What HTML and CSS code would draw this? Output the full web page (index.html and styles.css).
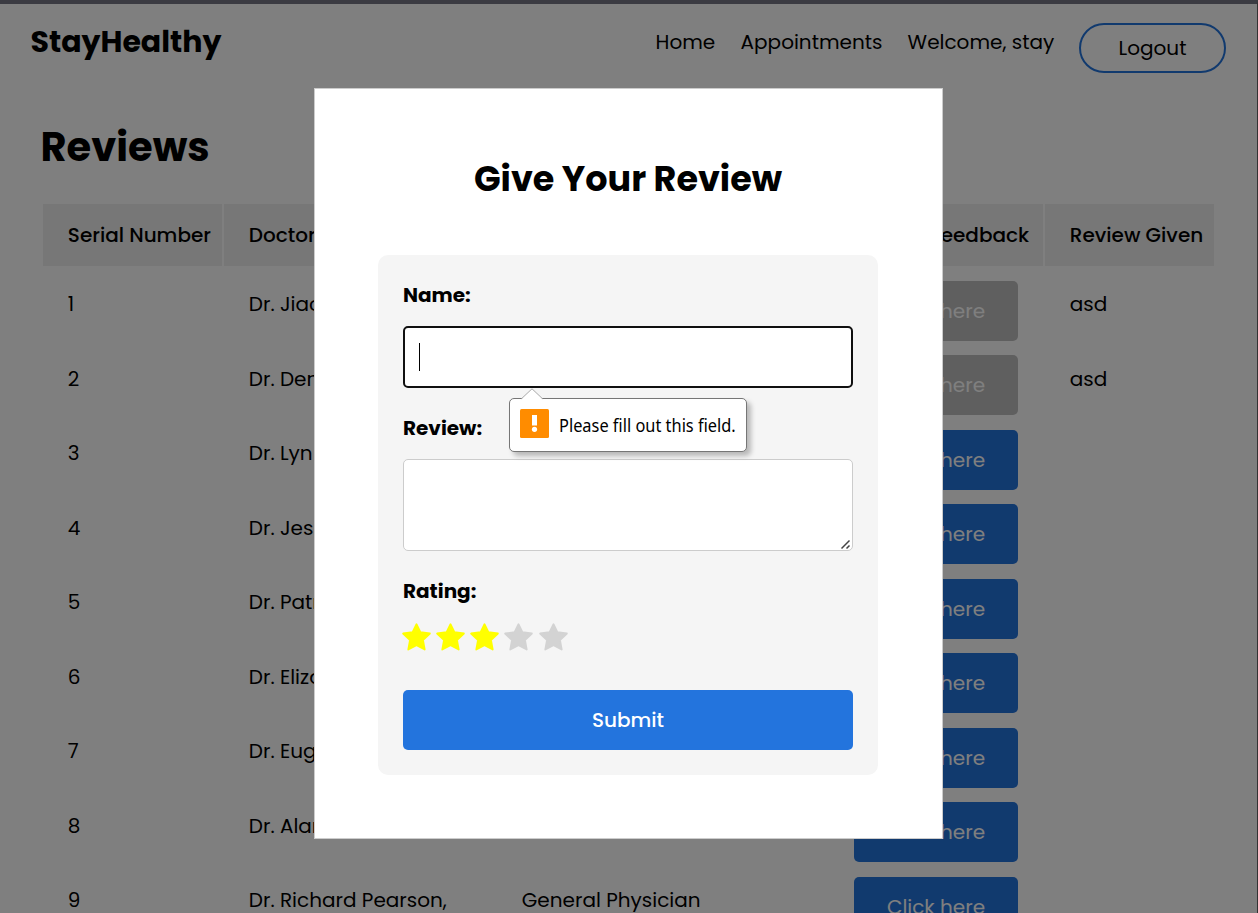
FILE: index.html
```html
<!DOCTYPE html>
<html lang="en">
<head>
<meta charset="utf-8">
<title>StayHealthy</title>
<link rel="stylesheet" href="styles.css">
</head>
<body>
<div class="page">
  <header class="topbar">
    <div class="brand">StayHealthy</div>
    <nav class="nav">
      <a>Home</a>
      <a>Appointments</a>
      <a>Welcome, stay</a>
      <button class="logout">Logout</button>
    </nav>
  </header>
  <main class="reviews">
    <h1 class="title">Reviews</h1>
    <div class="row head"><div>Serial Number</div><div>Doctor Name</div><div>Speciality</div><div>Provide feedback</div><div>Review Given</div></div>
    <div class="row"><div>1</div><div>Dr. Jiao</div><div></div><div><button class="click off">Click here</button></div><div>asd</div></div>
    <div class="row"><div>2</div><div>Dr. Den</div><div></div><div><button class="click off">Click here</button></div><div>asd</div></div>
    <div class="row"><div>3</div><div>Dr. Lyn</div><div></div><div><button class="click">Click here</button></div><div></div></div>
    <div class="row"><div>4</div><div>Dr. Jess</div><div></div><div><button class="click">Click here</button></div><div></div></div>
    <div class="row"><div>5</div><div>Dr. Patr</div><div></div><div><button class="click">Click here</button></div><div></div></div>
    <div class="row"><div>6</div><div>Dr. Eliza</div><div></div><div><button class="click">Click here</button></div><div></div></div>
    <div class="row"><div>7</div><div>Dr. Euge</div><div></div><div><button class="click">Click here</button></div><div></div></div>
    <div class="row"><div>8</div><div>Dr. Alan</div><div></div><div><button class="click">Click here</button></div><div></div></div>
    <div class="row"><div>9</div><div>Dr. Richard Pearson,</div><div>General Physician</div><div><button class="click">Click here</button></div><div></div></div>
  </main>
</div>
<div class="overlay">
  <section class="modal">
    <h2 class="modal-title">Give Your Review</h2>
    <form class="form">
      <div class="label">Name:</div>
      <div class="input"><span class="caret"></span>
        <div class="tip">
          <svg class="tip-arrow" width="22" height="12" viewBox="0 0 22 12"><path d="M0.5 11 L11 0.8 L21.5 11 V12 H0.5Z" fill="#fff"/><path d="M0.5 10.7 L11 0.8 L21.5 10.7" fill="none" stroke="#aaa"/></svg>
          <svg class="tip-icon" width="29" height="29" viewBox="0 0 29 29"><rect width="29" height="29" rx="1.5" fill="#ff8c00"/><path d="M12 6h5v10.5h-5z" fill="#fff"/><circle cx="14.5" cy="20.3" r="2.6" fill="#fff"/></svg>
          <span class="tip-text">Please fill out this field.</span>
        </div>
      </div>
      <div class="label">Review:</div>
      <div class="area"><svg width="12" height="12" viewBox="0 0 12 12"><path d="M1.5 10.5 L9.5 2.5 M6.5 10.5 L9.5 7.5" stroke="#444" stroke-width="1.5"/></svg></div>
      <div class="label">Rating:</div>
      <div class="stars">
        <svg class="star on" viewBox="0 0 29 28"><path d="M14.5 1.2 18.4 9.2 27.9 10.5 21 17.1 22.7 26.5 14.5 22.2 6.3 26.5 8 17.1 1.1 10.5 10.6 9.2Z"/></svg>
        <svg class="star on" viewBox="0 0 29 28"><path d="M14.5 1.2 18.4 9.2 27.9 10.5 21 17.1 22.7 26.5 14.5 22.2 6.3 26.5 8 17.1 1.1 10.5 10.6 9.2Z"/></svg>
        <svg class="star on" viewBox="0 0 29 28"><path d="M14.5 1.2 18.4 9.2 27.9 10.5 21 17.1 22.7 26.5 14.5 22.2 6.3 26.5 8 17.1 1.1 10.5 10.6 9.2Z"/></svg>
        <svg class="star" viewBox="0 0 29 28"><path d="M14.5 1.2 18.4 9.2 27.9 10.5 21 17.1 22.7 26.5 14.5 22.2 6.3 26.5 8 17.1 1.1 10.5 10.6 9.2Z"/></svg>
        <svg class="star" viewBox="0 0 29 28"><path d="M14.5 1.2 18.4 9.2 27.9 10.5 21 17.1 22.7 26.5 14.5 22.2 6.3 26.5 8 17.1 1.1 10.5 10.6 9.2Z"/></svg>
      </div>
      <button class="submit" type="button">Submit</button>
    </form>
  </section>
</div>
</body>
</html>
```
FILE: styles.css
```css
* { box-sizing: border-box; }
html, body { height: 100%; margin: 0; overflow: hidden; }
body { font-family: Poppins, Inter, "Open Sans", sans-serif; font-size: 20px; line-height: 30px; color: #000; background: #fff; }
button { font: inherit; color: #fff; border: 0; padding: 0; }
.page { height: 913px; overflow: hidden; border-top: 4px solid #3b3b42; border-right: 1px solid #333; }
.topbar { display: flex; justify-content: space-between; height: 84px; padding: 19px 31px 0 30.5px; }
.brand { font-size: 30px; font-weight: 700; line-height: 38px; white-space: nowrap; }
.nav { display: grid; grid-template-columns: 85px 167px 171px 147px; line-height: 39px; white-space: nowrap; }
.nav a { margin-left: -0.4px; }
.logout { height: 50px; padding-top: 1px; border: 2px solid #2374dd; border-radius: 25px; background: #fff; color: #000; }
.reviews { padding: 0 43px; }
.title { margin: 29px 0 27px -2.5px; height: 60px; font-size: 40px; line-height: 61px; font-weight: 700; }
.row { display: grid; grid-template-columns: 179px 271px 330px 214px 169px; gap: 2px; height: 72.5px; margin-bottom: 2px; white-space: nowrap; }
.row > div { padding: 21.4px 0 0 24.8px; }
.row > div:nth-child(4) { padding: 12.9px 0 0 25px; }
.head { height: 62px; font-weight: 500; }
.head > div, .head > div:nth-child(4) { background: #efefef; padding: 15.9px 0 0 24.8px; }
.click { display: block; width: 164px; height: 60px; border-radius: 5px; background: #2374dd; }
.off { background: #bfbfbf; }
.overlay { position: absolute; top: 4px; left: 0; width: 1257px; height: 909px; padding: 84px 0 0 314px; background: rgba(0, 0, 0, 0.5); }
.modal { width: 629px; height: 751px; padding: 64px 63px; border: 1px solid #ccc; background: #fff; }
.modal-title { margin: 0 1px 48px 0; height: 54px; font-size: 35px; line-height: 52px; font-weight: 700; text-align: center; white-space: nowrap; }
.form { width: 500px; height: 520px; padding: 25px; border-radius: 10px; background: #f5f5f5; }
.label { height: 30px; line-height: 30.5px; font-weight: 700; margin-bottom: 16px; }
.input { position: relative; display: flex; align-items: center; height: 62px; margin-bottom: 25px; padding-left: 14px; border: 2px solid #101010; border-radius: 5px; background: #fff; }
.caret { width: 1px; height: 28px; background: #000; }
.area { display: flex; justify-content: flex-end; align-items: flex-end; height: 92px; margin-bottom: 25px; border: 1px solid #ccc; border-radius: 5px; background: #fff; }
.tip { position: absolute; left: 104px; top: 70px; width: 238px; height: 54px; display: flex; gap: 10px; padding: 10px; border: 1px solid #767676; border-radius: 5px; background: #fff; box-shadow: 4px 4px 5px rgba(0, 0, 0, 0.25); }
.tip-arrow { position: absolute; left: 11px; top: -11px; }
.tip-icon { flex: none; }
.tip-text { display: block; width: 178px; flex: none; font: 18.4px/32px "Noto Sans", "Open Sans", sans-serif; white-space: nowrap; transform: scaleX(0.89); transform-origin: 0 0; }
.stars { display: flex; gap: 5.1px; height: 30px; margin: 0 0 38px -0.8px; padding-top: 1px; }
.star { width: 29px; height: 28px; flex: none; fill: #d3d3d3; stroke: #d3d3d3; stroke-width: 1.8; stroke-linejoin: round; }
.on { fill: #ff0; stroke: #ff0; }
.submit { display: block; width: 450px; height: 60px; border-radius: 5px; background: #2374dd; font-weight: 500; }
```
